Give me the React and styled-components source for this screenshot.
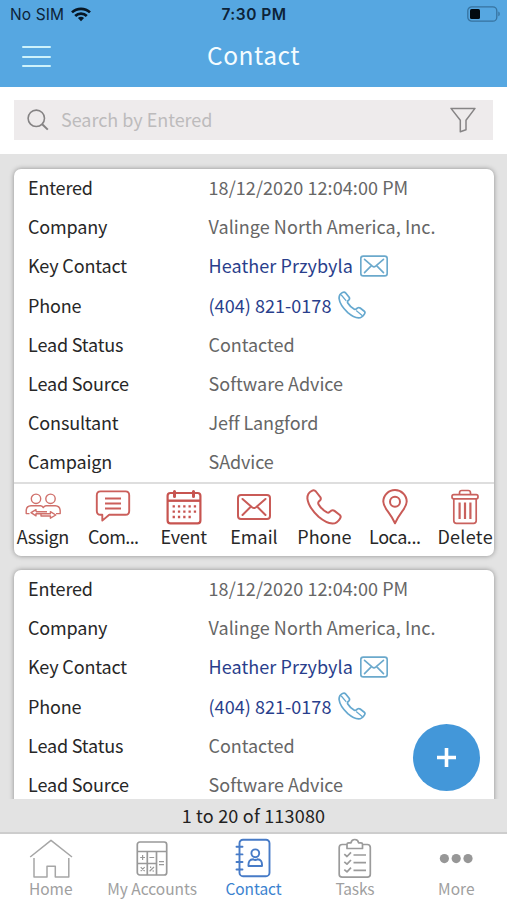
import React, { useState } from 'react';
import styled, { createGlobalStyle } from 'styled-components';

const GlobalStyle = createGlobalStyle`
  * {
    box-sizing: border-box;
  }
  body {
    margin: 0;
    background: #fff;
    font-family: 'Noto Sans CJK SC', 'Noto Sans', sans-serif;
  }
`

const Screen = styled.div`
  position: relative;
  display: flex;
  flex-direction: column;
  width: 507px;
  height: 900px;
  overflow: hidden;
`

const Header = styled.header`
  height: 87px;
  background: #56a7e1;
`

const StatusBar = styled.div`
  display: grid;
  grid-template-columns: 1fr auto 1fr;
  align-items: center;
  height: 29px;
  padding: 0 9px 0 10px;
  font-family: Inter, sans-serif;
  font-size: 15.5px;
  color: #0d2338;
  .carrier {
    display: flex;
    align-items: center;
    gap: 7px;
    letter-spacing: 0.1px;
  }
  .time {
    font-weight: 600;
    font-size: 15.5px;
    letter-spacing: 0.5px;
  }
  .battery {
    justify-self: end;
    margin-top: -1px;
    margin-right: -2px;
  }
  svg {
    display: block;
  }
`

const NavBar = styled.div`
  display: grid;
  grid-template-columns: 1fr auto 1fr;
  align-items: center;
  height: 54px;
  padding: 0 22px;
  h1 {
    margin: 0;
    font-size: 24.5px;
    line-height: 52px;
    height: 54px;
    font-weight: 400;
    letter-spacing: 0.5px;
    color: #f4fcff;
  }
`

const MenuButton = styled.button`
  display: flex;
  flex-direction: column;
  justify-content: space-between;
  width: 29px;
  height: 21px;
  margin-top: 1px;
  padding: 0;
  border: 0;
  background: none;
  span {
    width: 100%;
    height: 2px;
    border-radius: 1px;
    background: #cdf2fb;
  }
`

const SearchSection = styled.div`
  height: 67px;
  padding: 13px 14px;
  background: #fff;
`

const SearchBox = styled.div`
  display: flex;
  align-items: center;
  height: 40px;
  padding: 0 17px 0 13px;
  background: #eeebec;
  input {
    flex: 1;
    height: 38px;
    margin-left: 12px;
    padding: 0 0 2px;
    border: 0;
    outline: 0;
    background: none;
    font-family: inherit;
    font-size: 18px;
    letter-spacing: -0.03px;
    color: #555;
  }
  input::placeholder {
    color: #bdbbbc;
    opacity: 1;
  }
`

const List = styled.main`
  display: flex;
  flex-direction: column;
  gap: 14px;
  height: 645px;
  padding: 15px 13px 0 14px;
  overflow: hidden;
  background: #e3e3e3;
`

const Card = styled.article`
  flex: none;
  height: 387px;
  border-radius: 7px;
  background: #fff;
  box-shadow: 0 0 5px rgba(0, 0, 0, 0.38);
`

const Field = styled.div`
  display: grid;
  grid-template-columns: 180.5px 1fr;
  align-items: center;
  height: 39.1px;
  padding: 0 0 1.6px 14px;
  font-size: 18px;
  line-height: 37px;
  white-space: nowrap;
`

const Label = styled.span`
  color: #272727;
  letter-spacing: -0.16px;
`

const Value = styled.span`
  display: flex;
  align-items: center;
  gap: 7px;
  color: ${({ $link }) => ($link ? '#293e8c' : '#666')};
  letter-spacing: ${({ $spacing }) => $spacing || 0}px;
`

const Actions = styled.div`
  display: grid;
  grid-template-columns: repeat(7, 70.4px);
  justify-content: center;
  height: 74px;
  border-top: 2px solid #dedede;
`

const Action = styled.button`
  display: flex;
  flex-direction: column;
  align-items: center;
  padding: 5px 0 0;
  border: 0;
  background: none;
  font-family: inherit;
  font-size: 18px;
  line-height: 22px;
  letter-spacing: ${({ $spacing }) => $spacing || 0}px;
  color: #272727;
  svg {
    flex: none;
  }
`

const Counter = styled.div`
  height: 35px;
  border-bottom: 2px solid #cdcdcd;
  background: #e3e3e3;
  color: #222;
  font-size: 18px;
  line-height: 32px;
  letter-spacing: 0.2px;
  text-align: center;
`

const TabBar = styled.nav`
  display: grid;
  grid-template-columns: repeat(5, 1fr);
  height: 66px;
  background: #fff;
`

const Tab = styled.button`
  display: flex;
  flex-direction: column;
  align-items: center;
  padding: 4px 0 0;
  border: 0;
  background: none;
  font-family: inherit;
  font-size: 15.5px;
  line-height: 16px;
  letter-spacing: ${({ $spacing }) => $spacing || 0}px;
  white-space: nowrap;
  color: ${({ $active }) => ($active ? '#3a82cf' : '#a0a0a0')};
  svg {
    flex: none;
  }
`

const AddButton = styled.button`
  position: absolute;
  right: 27px;
  bottom: 109px;
  display: flex;
  align-items: center;
  justify-content: center;
  width: 67px;
  height: 67px;
  padding: 0;
  border: 0;
  border-radius: 50%;
  background: #4397d9;
`

const WifiIcon = () => (
  <svg width="20" height="15" viewBox="0 0 20 15" fill="none" stroke="#071725" strokeWidth="2.7">
    <path d="M1 5.4C6 .6 14 .6 19 5.4" />
    <path d="M4.2 9C7.4 5.8 12.6 5.8 15.8 9" />
    <path d="M6.9 11.1Q10 8.6 13.1 11.1L10 14.3Z" fill="#071725" stroke="none" />
  </svg>
)

const BatteryIcon = () => (
  <svg width="33" height="16" viewBox="0 0 33 16">
    <rect x=".8" y=".8" width="29" height="14.4" rx="4" fill="none" stroke="#37739f" strokeWidth="1.3" />
    <rect x="3" y="3" width="10" height="10" rx="1.6" fill="#020a10" />
    <path d="M31.3 5.5q1.5.5 1.5 2.4t-1.5 2.4z" fill="#37739f" />
  </svg>
)

const SearchIcon = () => (
  <svg width="22" height="22" viewBox="0 0 22 22" fill="none" stroke="#858384" strokeWidth="1.6">
    <circle cx="9.3" cy="9.3" r="8.2" />
    <path d="M15.2 15.2l5.6 5.4" strokeWidth="2" />
  </svg>
)

const FilterIcon = () => (
  <svg width="26" height="26" viewBox="0 0 26 26" fill="none" stroke="#868485" strokeWidth="1.5" strokeLinejoin="round">
    <path d="M1 1.4H25L16 13.3V22.8L10.3 24.7V13.3Z" />
  </svg>
)

const MailIcon = ({ width = 34, height = 26, color = '#c95b57' }) => (
  <svg width={width} height={height} viewBox="0 0 34 26" fill="none" stroke={color} strokeWidth="2" strokeLinecap="round">
    <rect x="1" y="1" width="32" height="24" rx="3" />
    <path d="M5.5 5L15 13.2Q17 14.8 19 13.2L28.5 5M5.5 21L13 13.5M28.5 21L21 13.5" />
  </svg>
)

const PhoneIcon = ({ size = 36, color = '#c95b57', inner }) => (
  <svg width={size} height={size} viewBox="0 0 36 36" fill="none" stroke={color} strokeWidth={inner ? 2.2 : 2} strokeLinejoin="round">
    <path d="M5.8 1.9Q8.2 .5 9.9 2.5L14.3 8.1Q15.4 9.9 14.1 11.3L12.6 12.8Q11.8 14 12.6 15.4Q15.6 20.4 21 23.4Q22.4 24.1 23.5 23.1L25.2 21.7Q26.9 20.7 28.5 21.9L33.8 26Q35.4 27.5 34.1 29.4Q31 34.6 26.5 34.6Q20.1 34.2 12.6 27.8Q2.3 18 1.4 9.6Q1.2 4.2 5.8 1.9Z" />
    {inner && <path d="M4 4.8L10.6 12.6M23.4 25.2L31.4 31.8" strokeWidth="1.6" />}
  </svg>
)

const AssignIcon = () => (
  <svg width="36" height="36" viewBox="0 0 36 36" fill="none" stroke="#d0706b" strokeWidth="1.4" strokeLinejoin="round">
    <circle cx="11" cy="9.8" r="4.7" />
    <circle cx="25.5" cy="9.8" r="4.7" />
    <path d="M4.5 24.6H1.2V21.6Q1.4 17 6 16.8H15.6Q17.6 17 18.3 18.6Q19 17 21 16.8H30.4Q34.8 17 35.2 21.6V24.6H31" />
    <path d="M11 22.8V20.6L6 23.7L11 26.8V24.8H25.4V22.6L30.8 26L25.4 29.2V27H16V24.8M11 22.8H22" />
  </svg>
)

const CommentIcon = () => (
  <svg width="36" height="36" viewBox="0 0 36 36" fill="none" stroke="#cb5f5b" strokeWidth="1.9" strokeLinejoin="round">
    <path d="M5.5 2.4H30.5Q34.2 2.4 34.2 6.2V21.9Q34.2 25.7 30.5 25.7H14.2L7.3 31.6V25.7H5.5Q1.8 25.7 1.8 21.9V6.2Q1.8 2.4 5.5 2.4Z" />
    <path d="M10 9.6H26M10 14.6H26M10 19.6H26" strokeWidth="2" />
  </svg>
)

const EventIcon = () => (
  <svg width="36" height="36" viewBox="0 0 36 36" fill="none" stroke="#c75450" strokeWidth="2.2">
    <rect x="1.6" y="4" width="32.8" height="30.3" rx="2.8" />
    <path d="M2 11.7H34" strokeWidth="2.4" />
    <path d="M8.5 2.5V7.5M27.5 2.5V7.5" strokeWidth="3" strokeLinecap="round" />
    <path d="M6.6 17.4H30.4M6.6 22.7H30.4M6.6 28H24.9" strokeWidth="2.3" strokeDasharray="2.3 3" />
  </svg>
)

const LocationIcon = () => (
  <svg width="36" height="36" viewBox="0 0 36 36" fill="none" stroke="#c95b57" strokeWidth="2" strokeLinejoin="round">
    <path d="M18 34.3Q14.8 27.6 11 22.6Q6.4 16.8 6.3 12.6A11.7 11.5 0 0 1 29.7 12.6Q29.6 16.8 25 22.6Q21.2 27.6 18 34.3Z" />
    <circle cx="18" cy="12.7" r="5" />
  </svg>
)

const DeleteIcon = () => (
  <svg width="36" height="36" viewBox="0 0 36 36" fill="none" stroke="#c9615d" strokeWidth="1.7" strokeLinejoin="round">
    <path d="M12.5 5.5V3.8Q12.6 1.5 14.8 1.5H21.2Q23.4 1.5 23.5 3.8V5.5" />
    <rect x="5" y="5.6" width="26" height="4.3" rx="1.8" />
    <path d="M6.8 10V31.8Q6.9 34.4 9.4 34.4H26.6Q29.1 34.4 29.2 31.8V10" />
    <path d="M12.6 13.5V30M18 13.5V30M23.4 13.5V30" strokeWidth="2.2" />
  </svg>
)

const HomeIcon = () => (
  <svg width="44" height="42" viewBox="0 0 44 42" fill="none" stroke="#a6a6a6" strokeWidth="1.5" strokeLinejoin="round">
    <path d="M1.2 19L22 2.3L43 19M5 20V39H18V28.3H26.3V39H39.8V20" />
  </svg>
)

const AccountsIcon = () => (
  <svg width="36" height="42" viewBox="0 0 36 42" fill="none" stroke="#999" strokeWidth="1.7">
    <rect x="3.3" y="4" width="29.4" height="33" rx="2.5" />
    <path d="M3.5 13.5H32.5M13.3 13.5V37M22.5 13.5V37M3.5 25.5H22.5" />
    <path d="M6.2 19.5H11M8.6 17.1V21.9M15.4 19.5H20.2M6.7 29.2L10.7 33.2M10.7 29.2L6.7 33.2M15.6 33.3L20 29M25 23.7H30M25 26.7H30" strokeWidth="1.2" />
    <path d="M16 29.2H17.2M18.6 33H19.8" strokeWidth="1.4" />
  </svg>
)

const ContactIcon = () => (
  <svg width="36" height="42" viewBox="0 0 36 42" fill="none" stroke="#477bc7" strokeWidth="1.9" strokeLinecap="round">
    <rect x="4.5" y="1.7" width="30" height="36.5" rx="3.5" />
    <path d="M1.5 8.7H7.5M1.5 16.4H7.5M1.5 24H7.5M1.5 31.5H7.5" />
    <circle cx="20.3" cy="15.3" r="3.9" />
    <path d="M13.5 28Q13 21.5 18.2 21.3Q20.3 22.7 22.4 21.3Q27.5 21.5 27 28Z" strokeLinejoin="round" />
  </svg>
)

const TasksIcon = () => (
  <svg width="36" height="42" viewBox="0 0 36 42" fill="none" stroke="#9b9b9b" strokeWidth="1.7" strokeLinejoin="round">
    <path d="M10 6.5H5.2Q2.2 6.5 2.2 9.5V36.3Q2.2 39.2 5.2 39.2H30.3Q33.3 39.2 33.3 36.3V9.5Q33.3 6.5 30.3 6.5H25.4" />
    <path d="M10 10.5V6.2Q10.1 4.8 11.7 4.8H14Q14.5 1.5 17.8 1.5T21.6 4.8H24Q25.5 4.8 25.5 6.2V10.5Z" />
    <path d="M7.3 16.2L10 18.5L14 14.3M7.3 23.9L10 26.2L14 22M7.3 31.6L10 33.9L14 29.7M16.5 17H29M16.5 24.7H29M16.5 32.4H29" />
  </svg>
)

const MoreIcon = () => (
  <svg width="36" height="42" viewBox="0 0 36 42" fill="#979797">
    <circle cx="6.4" cy="20.6" r="4.6" />
    <circle cx="18.2" cy="20.6" r="4.6" />
    <circle cx="30" cy="20.6" r="4.6" />
  </svg>
)

const fields = [
  { label: 'Entered', value: '18/12/2020 12:04:00 PM', spacing: 0.08 },
  { label: 'Company', value: 'Valinge North America, Inc.', spacing: 0.05 },
  { label: 'Key Contact', value: 'Heather Przybyla', spacing: 0.08, link: true, icon: <MailIcon width={28} height={22} color="#6ba9cc" /> },
  { label: 'Phone', value: '(404) 821-0178', spacing: 0.04, link: true, icon: <PhoneIcon size={28} color="#65a8cf" inner /> },
  { label: 'Lead Status', value: 'Contacted', spacing: -0.05 },
  { label: 'Lead Source', value: 'Software Advice' },
  { label: 'Consultant', value: 'Jeff Langford', spacing: -0.09 },
  { label: 'Campaign', value: 'SAdvice', spacing: -0.1 },
]

const actions = [
  { label: 'Assign', spacing: -0.35, icon: <AssignIcon /> },
  { label: 'Com...', spacing: -0.6, icon: <CommentIcon /> },
  { label: 'Event', spacing: -0.25, icon: <EventIcon /> },
  { label: 'Email', icon: <MailIcon height={36} /> },
  { label: 'Phone', icon: <PhoneIcon /> },
  { label: 'Loca...', spacing: -0.45, icon: <LocationIcon /> },
  { label: 'Delete', spacing: 0.3, icon: <DeleteIcon /> },
]

const tabs = [
  { label: 'Home', icon: <HomeIcon /> },
  { label: 'My Accounts', icon: <AccountsIcon /> },
  { label: 'Contact', spacing: -0.08, icon: <ContactIcon /> },
  { label: 'Tasks', spacing: -0.2, icon: <TasksIcon /> },
  { label: 'More', icon: <MoreIcon /> },
]

const ContactCard = () => {
  return (
    <Card>
      {fields.map(({ label, value, link, icon, spacing }) => (
        <Field key={label}>
          <Label>{label}</Label>
          <Value $link={link} $spacing={spacing}>{value}{icon}</Value>
        </Field>
      ))}
      <Actions>
        {actions.map(({ label, icon, spacing }) => (
          <Action key={label} $spacing={spacing}>{icon}{label}</Action>
        ))}
      </Actions>
    </Card>
  )
}

const App = () => {
  const [search, setSearch] = useState('')
  const [activeTab, setActiveTab] = useState('Contact')

  return (
    <Screen>
      <GlobalStyle />
      <Header>
        <StatusBar>
          <div className="carrier">No SIM <WifiIcon /></div>
          <div className="time">7:30 PM</div>
          <div className="battery"><BatteryIcon /></div>
        </StatusBar>
        <NavBar>
          <MenuButton aria-label="Menu"><span /><span /><span /></MenuButton>
          <h1>Contact</h1>
        </NavBar>
      </Header>
      <SearchSection>
        <SearchBox>
          <SearchIcon />
          <input value={search} placeholder="Search by Entered" onChange={(e) => setSearch(e.target.value)} />
          <FilterIcon />
        </SearchBox>
      </SearchSection>
      <List>
        <ContactCard />
        <ContactCard />
      </List>
      <Counter>1 to 20 of 113080</Counter>
      <TabBar>
        {tabs.map(({ label, icon, spacing }) => (
          <Tab key={label} $active={label === activeTab} $spacing={spacing} onClick={() => setActiveTab(label)}>
            {icon}{label}
          </Tab>
        ))}
      </TabBar>
      <AddButton aria-label="Add">
        <svg width="19" height="19" viewBox="0 0 19 19" stroke="#fff" strokeWidth="3.6">
          <path d="M0 9.5H19M9.5 0V19" />
        </svg>
      </AddButton>
    </Screen>
  )
};

export default App;
